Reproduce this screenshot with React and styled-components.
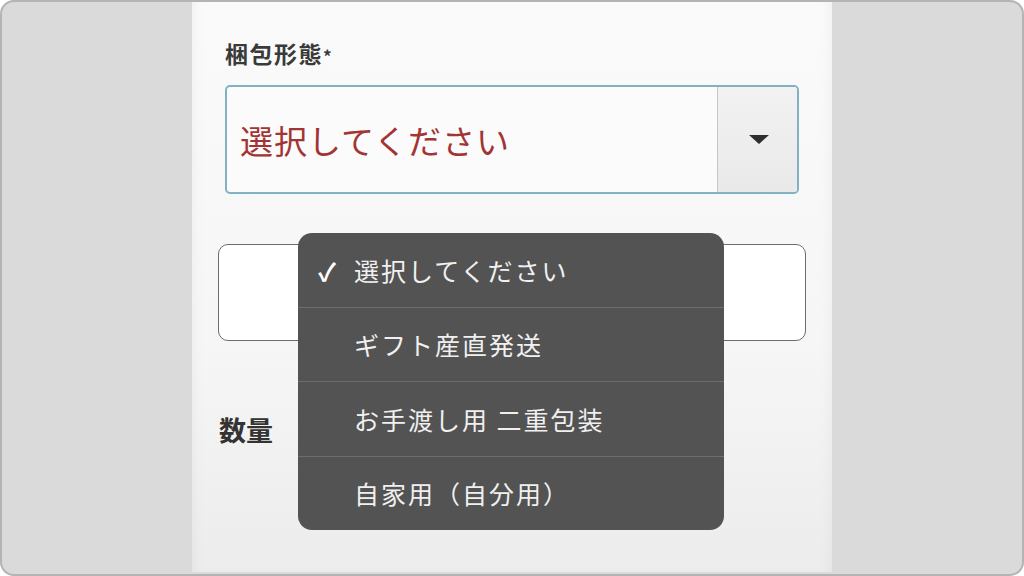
import styled, { createGlobalStyle } from "styled-components";

const GlobalStyle = createGlobalStyle`
  html, body {
    margin: 0;
    padding: 0;
    background: #ffffff;
  }
  body {
    font-family: "Noto Sans CJK JP", "Noto Sans", sans-serif;
  }
`;

const options = ["選択してください", "ギフト産直発送", "お手渡し用 二重包装", "自家用（自分用）"];

function App() {
  return (
    <>
      <GlobalStyle />
      <Frame>
        <Column>
          <Label>
            梱包形態<Star>*</Star>
          </Label>
          <Select>
            <SelectText>選択してください</SelectText>
            <SelectButton>
              <Caret />
            </SelectButton>
          </Select>
          <EmptyBox />
          <QtyLabel>数量</QtyLabel>

          <Menu>
            {options.map((option, index) => (
              <MenuItem key={index}>
                <Check>{index === 0 ? "✓" : ""}</Check>
                {option}
              </MenuItem>
            ))}
          </Menu>
        </Column>
      </Frame>
    </>
  );
}
export default App;

const Frame = styled.div`
  box-sizing: border-box;
  width: 1024px;
  height: 576px;
  display: flex;
  justify-content: center;
  background: #dadada;
  border: 2px solid #b4b4b4;
  border-radius: 14px;
  overflow: hidden;
`;

const Column = styled.div`
  position: relative;
  box-sizing: border-box;
  width: 640px;
  height: 100%;
  margin-top: -2px;
  padding: 37px 0 0 33px;
  background: linear-gradient(180deg, #fafafa 0%, #f6f6f6 60%, #eeeeee 92%, #ececec 100%);
  box-shadow: inset 12px 0 14px -12px rgba(0, 0, 0, 0.05), inset -12px 0 14px -12px rgba(0, 0, 0, 0.05);
`;

const Label = styled.div`
  display: flex;
  align-items: flex-start;
  height: 32px;
  font-size: 23px;
  font-weight: 700;
  line-height: 32px;
  letter-spacing: 1.5px;
  color: #3a3a3a;
`;

const Star = styled.span`
  font-size: 17px;
  line-height: 38px;
`;

const Select = styled.div`
  box-sizing: border-box;
  display: flex;
  margin-top: 16px;
  width: 574px;
  height: 109px;
  border: 2px solid #80b2c2;
  border-radius: 5px;
  background: #fbfbfb;
  overflow: hidden;
`;

const SelectText = styled.div`
  flex: 1;
  display: flex;
  align-items: center;
  padding: 0 0 0 13px;
  font-size: 33px;
  letter-spacing: 1px;
  color: #a23434;
`;

const SelectButton = styled.div`
  width: 79px;
  display: flex;
  align-items: center;
  justify-content: center;
  background: linear-gradient(180deg, #f2f2f2, #e9e9e9);
  border-left: 1px solid #c6c6c6;
`;

const Caret = styled.div`
  width: 0;
  height: 0;
  margin-left: 2px;
  border-left: 10px solid transparent;
  border-right: 10px solid transparent;
  border-top: 9px solid #2e2e2e;
`;

const EmptyBox = styled.div`
  box-sizing: border-box;
  margin: 50px 0 0 -7px;
  width: 588px;
  height: 97px;
  border: 1.5px solid #6c6c6c;
  border-radius: 10px;
  background: #ffffff;
`;

const QtyLabel = styled.div`
  margin: 72px 0 0 -6px;
  font-size: 27px;
  font-weight: 700;
  line-height: 34px;
  color: #333333;
`;

const Menu = styled.div`
  position: absolute;
  left: 106px;
  top: 233px;
  width: 426px;
  height: 297px;
  display: flex;
  flex-direction: column;
  background: #535353;
  border-radius: 14px;
  overflow: hidden;
`;

const MenuItem = styled.div`
  flex: 1;
  display: flex;
  align-items: center;
  padding-left: 20px;
  font-size: 25px;
  letter-spacing: 2px;
  color: #f0f0f0;
  & + & {
    border-top: 1px solid #6d6d6d;
  }
`;

const Check = styled.span`
  width: 36px;
  font-size: 25px;
  font-weight: 700;
  letter-spacing: 0;
  color: #ffffff;
`;
